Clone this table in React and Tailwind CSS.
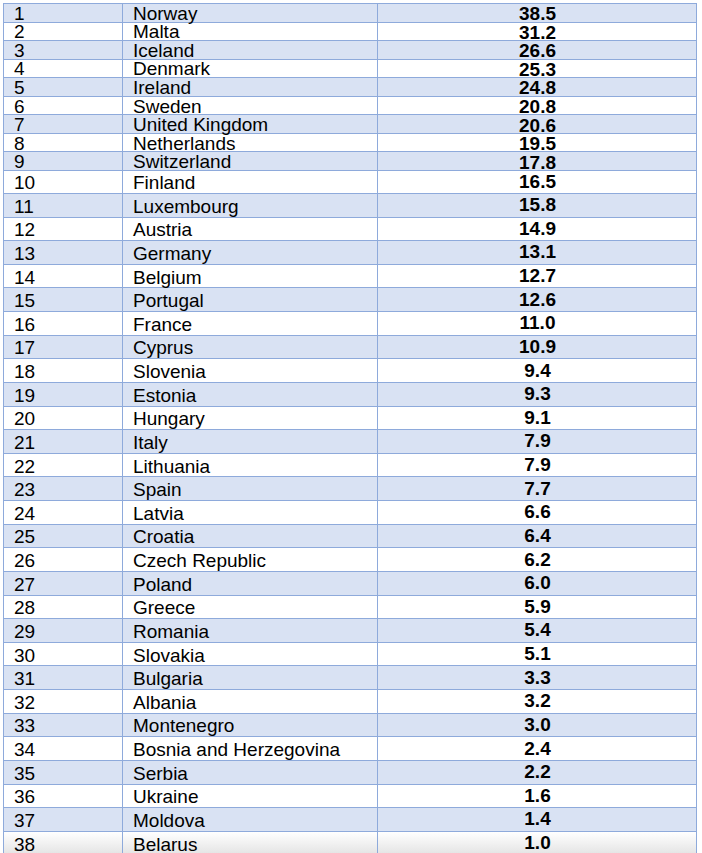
import React from "react";

const data = [
  ["Norway", "38.5"],
  ["Malta", "31.2"],
  ["Iceland", "26.6"],
  ["Denmark", "25.3"],
  ["Ireland", "24.8"],
  ["Sweden", "20.8"],
  ["United Kingdom", "20.6"],
  ["Netherlands", "19.5"],
  ["Switzerland", "17.8"],
  ["Finland", "16.5"],
  ["Luxembourg", "15.8"],
  ["Austria", "14.9"],
  ["Germany", "13.1"],
  ["Belgium", "12.7"],
  ["Portugal", "12.6"],
  ["France", "11.0"],
  ["Cyprus", "10.9"],
  ["Slovenia", "9.4"],
  ["Estonia", "9.3"],
  ["Hungary", "9.1"],
  ["Italy", "7.9"],
  ["Lithuania", "7.9"],
  ["Spain", "7.7"],
  ["Latvia", "6.6"],
  ["Croatia", "6.4"],
  ["Czech Republic", "6.2"],
  ["Poland", "6.0"],
  ["Greece", "5.9"],
  ["Romania", "5.4"],
  ["Slovakia", "5.1"],
  ["Bulgaria", "3.3"],
  ["Albania", "3.2"],
  ["Montenegro", "3.0"],
  ["Bosnia and Herzegovina", "2.4"],
  ["Serbia", "2.2"],
  ["Ukraine", "1.6"],
  ["Moldova", "1.4"],
  ["Belarus", "1.0"],
];

function Row({ i, name, value }) {
  const blue = i % 2 === 0;
  const small = i < 9;
  const last = i === data.length - 1;
  const h = small ? "h-[18.55px]" : i === 9 ? "h-[23px]" : "h-[23.63px]";
  const bg = last
    ? "bg-gradient-to-b from-white to-[#e4e4e4]"
    : blue
    ? "bg-[#d9e2f3]"
    : "bg-white";
  return (
    <div
      className={`grid grid-cols-[119px_255px_319px] ${h} ${bg} border-b border-[#8eaadb]`}
    >
      <div
        className={`border-r border-[#8eaadb] pl-[10px] flex items-center ${
          small ? "pt-[1px]" : "pt-[2px]"
        } whitespace-nowrap leading-[15px]`}
      >
        {i + 1}
      </div>
      <div
        className={`border-r border-[#8eaadb] pl-[10px] flex items-center ${
          small ? "pt-[1px]" : "pt-[2px]"
        } whitespace-nowrap leading-[15px]`}
      >
        {name}
      </div>
      <div
        className={`flex items-center justify-center font-bold whitespace-nowrap leading-[15px] ${
          small ? "pt-[2px]" : "pb-[1px]"
        }`}
      >
        {value}
      </div>
    </div>
  );
}

export default function App() {
  return (
    <div
      className="w-[702px] h-[853px] overflow-hidden bg-white text-black text-[19px]"
      style={{ fontFamily: '"Liberation Sans", Arial, sans-serif' }}
    >
      <div className="ml-[3px] mt-[3px] w-[694px] border-l border-t border-r border-[#8eaadb]">
        {data.map(([name, value], i) => (
          <Row key={i} i={i} name={name} value={value} />
        ))}
      </div>
    </div>
  );
}
